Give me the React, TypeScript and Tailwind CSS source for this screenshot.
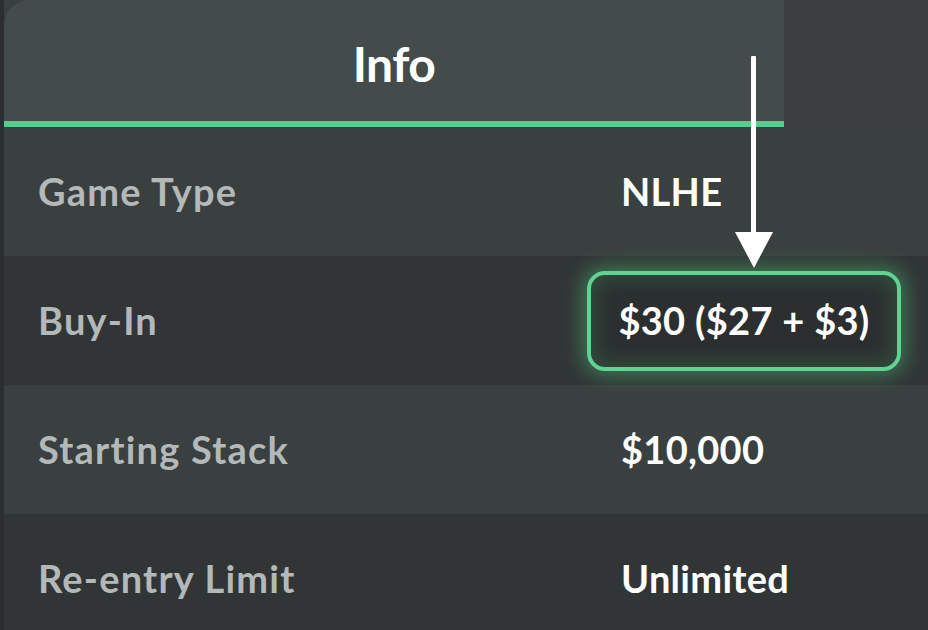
const rows = [
  { label: "Game Type", value: "NLHE", bg: "bg-[#3a3f3f]" },
  { label: "Buy-In", value: "$30 ($27 + $3)", bg: "bg-[#313536]", highlight: true },
  { label: "Starting Stack", value: "$10,000", bg: "bg-[#3a3f3f]" },
  { label: "Re-entry Limit", value: "Unlimited", bg: "bg-[#313536]" },
];

function Arrow() {
  return (
    <svg
      className="pointer-events-none absolute left-[734px] top-[56px]"
      width="40"
      height="214"
      viewBox="0 0 40 214"
    >
      <rect x="17" y="0" width="5" height="185" rx="1" fill="#ffffff" />
      <path d="M1 176 L39 176 L20 212 Z" fill="#ffffff" />
    </svg>
  );
}

export default function App() {
  return (
    <div
      className="relative h-[630px] w-[928px] overflow-hidden bg-[#2b2f30] pl-[4px]"
      style={{ fontFamily: "Lato, 'Open Sans', sans-serif" }}
    >
      <div className="flex h-[127px] bg-[#3b3f40]">
        <div className="flex w-[780px] items-center justify-center rounded-tl-[26px] border-b-[6px] border-[#56cf8e] bg-[#444b4b] pt-[6px]">
          <span className="text-[48px] font-bold tracking-[-0.5px] text-white">Info</span>
        </div>
      </div>

      {rows.map((r) => (
        <div key={r.label} className={`flex h-[129px] items-center ${r.bg}`}>
          <div className="w-[583px] pl-[34px] text-[38px] font-bold tracking-[1.2px] text-[#b3b8b9]">
            {r.label}
          </div>
          {r.highlight ? (
            <div className="flex h-[100px] w-[314px] items-center justify-center rounded-[18px] border-[4px] border-[#5fd492] bg-[#2b2f30] text-[38px] font-bold tracking-[0.3px] text-white shadow-[0_0_20px_5px_rgba(80,200,120,0.45),inset_0_0_20px_5px_rgba(80,200,120,0.2)]">
              {r.value}
            </div>
          ) : (
            <div className="pl-[34px] text-[38px] font-bold tracking-[0.3px] text-white">{r.value}</div>
          )}
        </div>
      ))}

      <Arrow />
    </div>
  );
}
